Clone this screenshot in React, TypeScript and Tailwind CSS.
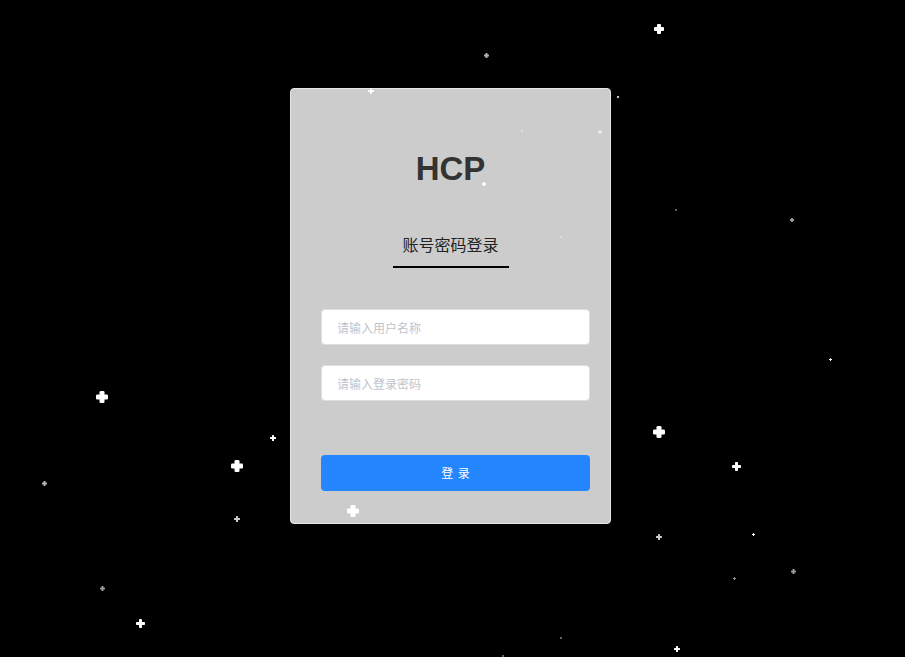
import React from 'react';

type Star = { x: number; y: number; s: number; o?: number };

// star field, centers in page px
const STARS: Star[] = [
  { x: 659, y: 29, s: 10 },
  { x: 486, y: 55, s: 5, o: 0.7 },
  { x: 371, y: 91, s: 6, o: 0.9 },
  { x: 618, y: 97, s: 2 },
  { x: 522, y: 131, s: 2, o: 0.5 },
  { x: 600, y: 132, s: 4, o: 0.6 },
  { x: 484, y: 184, s: 4 },
  { x: 676, y: 210, s: 2, o: 0.5 },
  { x: 792, y: 220, s: 4, o: 0.6 },
  { x: 561, y: 237, s: 2, o: 0.4 },
  { x: 830, y: 359, s: 3 },
  { x: 102, y: 397, s: 12 },
  { x: 273, y: 438, s: 6 },
  { x: 659, y: 432, s: 12 },
  { x: 237, y: 466, s: 12 },
  { x: 736, y: 466, s: 9 },
  { x: 44, y: 483, s: 5, o: 0.7 },
  { x: 237, y: 519, s: 6, o: 0.8 },
  { x: 353, y: 511, s: 12 },
  { x: 659, y: 537, s: 6, o: 0.8 },
  { x: 753, y: 534, s: 3 },
  { x: 793, y: 571, s: 5, o: 0.6 },
  { x: 734, y: 578, s: 3, o: 0.6 },
  { x: 102, y: 588, s: 5, o: 0.6 },
  { x: 140, y: 623, s: 9 },
  { x: 561, y: 638, s: 2, o: 0.5 },
  { x: 677, y: 649, s: 6 },
  { x: 503, y: 656, s: 2, o: 0.5 },
];

function StarDot({ x, y, s, o = 1 }: Star) {
  const arm = Math.max(1, Math.round(s * 0.38));
  return (
    <svg
      className="absolute"
      width={s}
      height={s}
      viewBox={`0 0 ${s} ${s}`}
      style={{ left: Math.round(x - s / 2), top: Math.round(y - s / 2), opacity: o }}
    >
      <rect x={(s - arm) / 2} y={0} width={arm} height={s} rx={arm / 4} fill="#fff" />
      <rect x={0} y={(s - arm) / 2} width={s} height={arm} rx={arm / 4} fill="#fff" />
    </svg>
  );
}

export default function App() {
  return (
    <div className="relative h-[657px] w-full overflow-hidden bg-black font-['Noto_Sans_CJK_SC',sans-serif]">
      <div className="pl-[290px] pt-[88px]">
        <div className="flex w-[321px] flex-col rounded-[4px] border border-[#e6e6e6] bg-[#cccccc] pb-[32px] pl-[30px] pr-[20px] pt-[63px]">
          <h1 className="ml-[-10px] text-center font-['Liberation_Sans',sans-serif] text-[33px] font-bold leading-[34px] text-[#333333]">
            HCP
          </h1>
          <div className="ml-[-10px] mt-[46px] flex justify-center">
            <span className="w-[116px] border-b-2 border-black pb-[10px] text-center text-[16px] leading-[24px] text-[#222222]">
              账号密码登录
            </span>
          </div>
          <div className="mt-[41px] flex flex-col gap-[20px]">
            <input
              type="text"
              placeholder="请输入用户名称"
              className="h-9 w-full rounded-[4px] border border-[#dcdfe6] bg-white px-[15px] text-[12px] text-[#606266] outline-none placeholder:text-[#c0c4cc]"
            />
            <input
              type="password"
              placeholder="请输入登录密码"
              className="h-9 w-full rounded-[4px] border border-[#dcdfe6] bg-white px-[15px] text-[12px] text-[#606266] outline-none placeholder:text-[#c0c4cc]"
            />
          </div>
          <button
            type="button"
            className="mt-[54px] h-9 w-full rounded-[4px] bg-[#2386ff] pl-[1px] text-[12px] tracking-[1px] text-white"
          >
            登 录
          </button>
        </div>
      </div>
      <div className="pointer-events-none absolute inset-0">
        {STARS.map((st, i) => (
          <StarDot key={i} {...st} />
        ))}
      </div>
    </div>
  );
}
